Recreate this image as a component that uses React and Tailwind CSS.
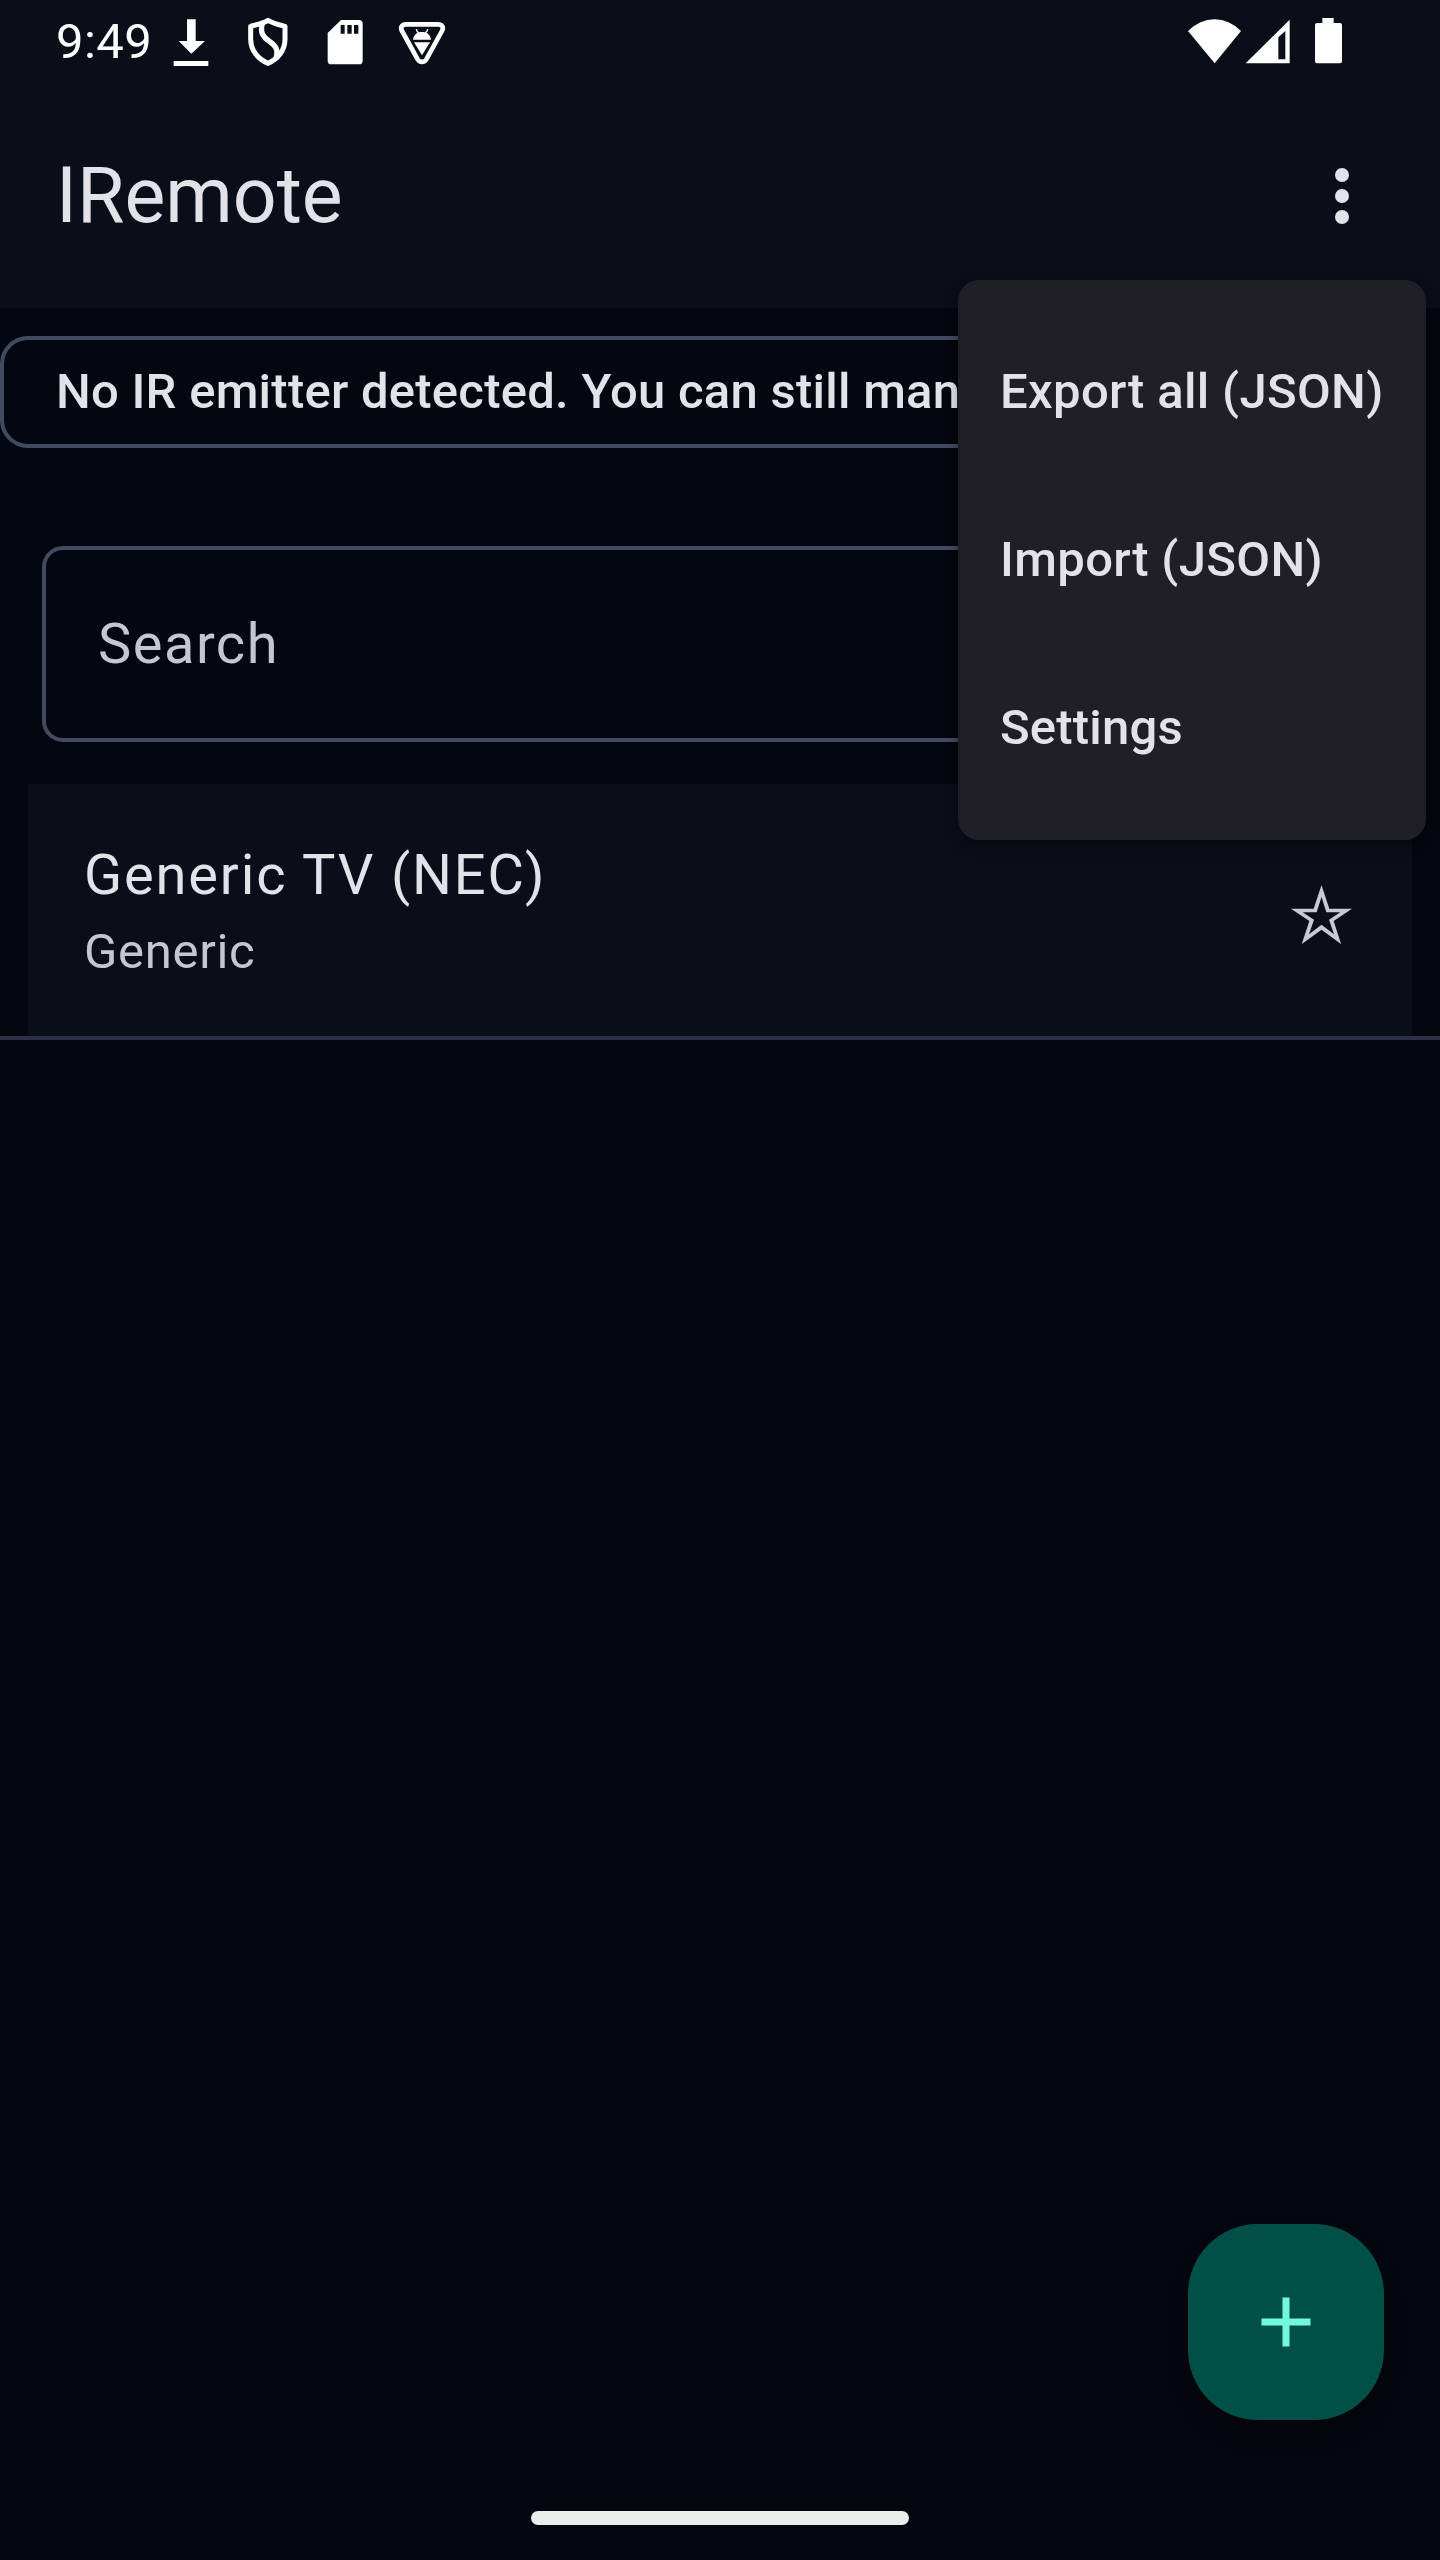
const MENU = [
  { label: "Export all (JSON)", tracking: "tracking-[0.35px]" },
  { label: "Import (JSON)", tracking: "tracking-[0.35px]" },
  { label: "Settings", tracking: "tracking-[0.2px]" },
];

function DownloadIcon() {
  return (
    <svg viewBox="488 24 168 180" className="h-[60px] w-[56px]" fill="#fff">
      <path d="M560 58H586V123H614L573 161L535 123H560Z" />
      <path d="M520 183H624V198H520Z" />
    </svg>
  );
}

function ShieldIcon() {
  return (
    <svg viewBox="719 24 168 180" className="h-[60px] w-[56px]" fill="none" stroke="#fff" strokeLinejoin="round">
      <path strokeWidth="15" d="M803 61C788 70 770 74 751 79V118C751 152 774 178 803 190C832 178 854 152 854 118V79C836 74 818 70 803 61Z" />
      <path strokeWidth="16" d="M786 70C778 100 790 112 806 123C826 137 835 148 827 176" />
    </svg>
  );
}

function SdCardIcon() {
  return (
    <svg viewBox="949 24 168 180" className="h-[60px] w-[56px]" fill="#fff">
      <path
        fillRule="evenodd"
        d="M1021 60H1075Q1086 60 1086 71V182Q1086 193 1075 193H992Q981 193 981 182V99ZM1020 75V101H1032V75ZM1040 75V101H1053V75ZM1060 75V101H1073V75Z"
      />
    </svg>
  );
}

function BugIcon() {
  return (
    <svg viewBox="1180 24 168 180" className="h-[60px] w-[56px]" fill="#fff">
      <path
        fill="none"
        stroke="#fff"
        strokeWidth="14"
        strokeLinejoin="round"
        d="M1216 73H1312C1324 73 1330 82 1324 93L1277 178C1271 188 1257 188 1251 178L1204 93C1198 82 1204 73 1216 73Z"
      />
      <path d="M1237 119C1239 103 1250 96 1264 96S1289 103 1291 119Z" />
      <path d="M1240 127H1288L1264 166Z" />
      <path fill="none" stroke="#fff" strokeWidth="4" d="M1247 87C1247 93 1250 96 1255 99M1281 87C1281 93 1278 96 1273 99" />
    </svg>
  );
}

function StatusBar() {
  return (
    <div className="flex h-[84px] items-start justify-between pl-[56px] pr-[96px] pt-2">
      <div className="flex items-start">
        <span className="w-[106.67px] pt-[5px] text-[49px] leading-[57px] tracking-[0.4px] text-white">9:49</span>
        <div className="flex gap-[21px]">
          <DownloadIcon />
          <ShieldIcon />
          <SdCardIcon />
          <BugIcon />
        </div>
      </div>
      <svg viewBox="84 24 468 180" className="h-[60px] w-[156px]" fill="#fff">
        <path d="M84 93A108 108 0 0 1 243 93L164 190Z" />
        <path fillRule="evenodd" d="M389 59V190H257ZM376 93L355 112V178H376Z" />
        <path d="M487 54H521V69H540Q546 69 546 75V184Q546 190 540 190H471Q465 190 465 184V75Q465 69 471 69H487Z" />
      </svg>
    </div>
  );
}

export default function App() {
  return (
    <div
      className="relative flex h-[2560px] w-[1440px] flex-col overflow-hidden bg-[#04070f] text-[#e2e2e9]"
      style={{ fontFamily: 'Roboto, "Liberation Sans", sans-serif' }}
    >
      <header className="h-[308px] shrink-0 bg-[#0a0e19]">
        <StatusBar />
        <div className="flex h-[224px] items-start justify-between pl-[56px] pr-[56px] pt-[63px]">
          <h1 className="text-[77px] leading-[98px]">IRemote</h1>
          <button className="mt-[7px] h-[84px] w-[84px]" aria-label="More options">
            <svg viewBox="0 0 24 24" className="h-full w-full" fill="#e2e2e9">
              <circle cx="12" cy="6" r="2" />
              <circle cx="12" cy="12" r="2" />
              <circle cx="12" cy="18" r="2" />
            </svg>
          </button>
        </div>
      </header>

      <div className="mt-[28px] flex h-[112px] w-[1384px] shrink-0 items-center rounded-[28px] border-4 border-[#414a5e] px-[52px]">
        <span className="whitespace-nowrap text-[49px] font-medium leading-[70px] tracking-[0.25px]">
          No IR emitter detected. You can still man
        </span>
      </div>

      <div className="mx-[42px] mt-[98px] flex h-[196px] shrink-0 items-center rounded-[21px] border-4 border-[#414a5e] px-[52px]">
        <span className="text-[56px] leading-[84px] tracking-[1.5px] text-[#c4c6d0]">Search</span>
      </div>

      <div className="mt-[42px] shrink-0 border-b-4 border-[#2b3044] px-[28px]">
        <div className="flex h-[252px] items-start justify-between bg-[#0a0e19] pl-[56px] pr-[60px] pt-[49px]">
          <div className="flex flex-col">
            <span className="text-[56px] leading-[84px] tracking-[1.85px]">Generic TV (NEC)</span>
            <span className="text-[49px] leading-[70px] tracking-[0.7px] text-[#c4c6d0]">Generic</span>
          </div>
          <svg viewBox="273 196 183 178" className="mt-[52px] h-[59.33px] w-[61px]" fill="#c8c9d2">
            <path
              fillRule="evenodd"
              d="M364.500 196L388 267.500H456L401 304L423.500 373.500L364.500 330L305 373.500L328 304L273 267.500H341ZM364.500 232L350 278H308L342 300L327 344L364.500 315L402 344L387 300L421 278H379Z"
            />
          </svg>
        </div>
      </div>

      <div className="absolute left-[958px] top-[280px] flex w-[468px] flex-col rounded-[21px] bg-[#211f26] py-[28px] shadow-[0_6px_12px_rgba(0,0,0,0.35)]">
        {MENU.map(({ label, tracking }) => (
          <div key={label} className="flex h-[168px] items-center px-[42px]">
            <span className={`whitespace-nowrap text-[49px] font-medium leading-[70px] ${tracking}`}>{label}</span>
          </div>
        ))}
      </div>

      <button
        aria-label="Add remote"
        className="absolute right-[56px] top-[2224px] flex h-[196px] w-[196px] items-center justify-center rounded-[70px] bg-[#005047] shadow-[0_14px_22px_rgba(0,0,0,0.3)]"
      >
        <svg viewBox="0 0 24 24" className="h-[84px] w-[84px]" fill="#72f8db">
          <path d="M19 13h-6v6h-2v-6H5v-2h6V5h2v6h6z" />
        </svg>
      </button>

      <div className="mb-[35px] mt-auto h-[14px] w-[378px] shrink-0 self-center rounded-full bg-[#ebedeb]" />
    </div>
  );
}
